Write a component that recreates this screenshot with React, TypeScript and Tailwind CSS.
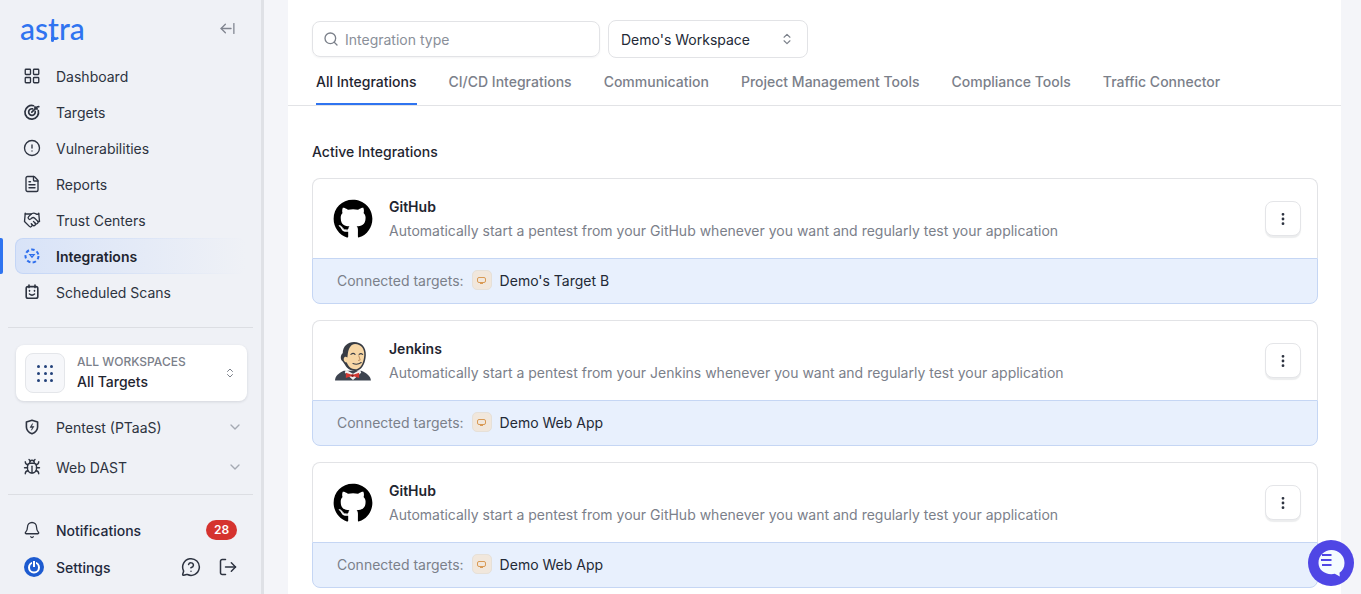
import React from "react";
import {
  LayoutGrid, CircleAlert, FileText, Handshake, ChevronsUpDown, ChevronDown, Bell, LogOut, Search, EllipsisVertical, Bug, ArrowLeftFromLine, MessageCircleQuestion,
} from "lucide-react";
import { FaGithub } from "react-icons/fa";

function TargetIcon() {
  return (
    <svg width="18" height="18" viewBox="0 0 18 18" fill="none" stroke="#2d3340" strokeWidth="1.7" strokeLinecap="round">
      <path d="M15.300 7.500A6.800 6.800 0 1 1 10.500 2.700" />
      <path d="M12.200 8.400A3.300 3.300 0 1 1 9.600 5.800" />
      <path d="M8.800 9.200L14 4M12 3.800V5.900H14.200M14 4l1.800-.4" />
    </svg>
  );
}

function IntegrationsIcon() {
  return (
    <svg width="18" height="18" viewBox="0 0 18 18" fill="none" stroke="#2f6fed" strokeWidth="2">
      <circle cx="9" cy="9" r="6.500" strokeDasharray="3.500 2.300" />
      <path d="M6.800 7.600h4.400L9 10.400z" strokeWidth="1.200" />
    </svg>
  );
}

function ScheduledIcon() {
  return (
    <svg width="18" height="18" viewBox="0 0 18 18" fill="none" stroke="#2d3340" strokeWidth="1.600" strokeLinecap="round">
      <rect x="3.200" y="3.600" width="11.600" height="11.600" rx="1.800" />
      <path d="M6 2v2.600M12 2v2.600M6.500 7.500v.6M11.500 7.500v.6M6.500 11c1.400 1.200 3.600 1.200 5 0" />
    </svg>
  );
}

function PentestIcon() {
  return (
    <svg width="18" height="18" viewBox="0 0 18 18" fill="none" stroke="#2d3340" strokeWidth="1.600" strokeLinejoin="round">
      <path d="M9 2.200l5.600 1.800v5c0 3.300-2.400 5.500-5.600 6.800C5.800 14.500 3.400 12.300 3.400 9V4z" />
      <path d="M9.600 5.500L7 9.400h2.400L8.400 12.300 11 8.500H8.700z" fill="#2d3340" strokeWidth="0.500" />
    </svg>
  );
}

function Jenkins() {
  return (
    <svg width="38" height="40" viewBox="0 0 36 39">
      <path d="M0.500 38.500c0-4 3-7 8.500-9.500h17c5 2 9 5 9.500 9.500z" fill="#3d4450" />
      <path d="M11 28l7 4 7-4 1 3-8 7-8-7z" fill="#f1f1f1" />
      <path d="M8 20C5 18 6 13 8 12 8 5 13 1 19 1c7 0 12 5 11.500 13-.5 7-2.500 13-8.500 15-6 1-10-2-12-6z" fill="#383c44" />
      <path d="M13 12C14 7 16 3 20 3c6 0 9.500 5 9 11-.5 7-3 12.500-7.500 13.500-4.500.5-8-2-9.500-6.500-2 0-3.500-2-3-4 .5-2 2-2 3.500-1z" fill="#f7d7a6" />
      <path d="M16 13c1.300-1 3-1 4 0M24 13c1-.8 2.400-.8 3.400 0M18 22c2.500 1 5.500.8 8-1" fill="none" stroke="#383c44" strokeWidth="1.100" strokeLinecap="round" />
      <path d="M23.500 14l1.500 4.500-2 .5" fill="none" stroke="#b98a5c" strokeWidth="0.900" />
      <path d="M11 31l6 1.800 1 0 6-1.800v5l-6-1.800-1 0-6 1.800z" fill="#d33833" />
      <circle cx="17.500" cy="33.800" r="1.300" fill="#8f1f1c" />
    </svg>
  );
}

const ic = { size: 18, strokeWidth: 1.800, color: "#2d3340" };

const nav = [
  { label: "Dashboard", icon: <LayoutGrid {...ic} /> },
  { label: "Targets", icon: <TargetIcon /> },
  { label: "Vulnerabilities", icon: <CircleAlert {...ic} /> },
  { label: "Reports", icon: <FileText {...ic} /> },
  { label: "Trust Centers", icon: <Handshake {...ic} /> },
  { label: "Integrations", icon: <IntegrationsIcon />, active: true },
  { label: "Scheduled Scans", icon: <ScheduledIcon /> },
];

const tabs = ["All Integrations", "CI/CD Integrations", "Communication", "Project Management Tools", "Compliance Tools", "Traffic Connector"];

const cards = [
  { name: "GitHub", target: "Demo's Target B", logo: <FaGithub size={40} color="#000" /> },
  { name: "Jenkins", target: "Demo Web App", logo: <Jenkins /> },
  { name: "GitHub", target: "Demo Web App", logo: <FaGithub size={40} color="#000" /> },
];

function NavRow({ n }: { n: (typeof nav)[number] }) {
  if (n.active) {
    return (
      <div className="relative h-[36px] flex items-center">
        <span className="absolute left-0 top-0 h-[36px] w-[3px] bg-[#2f74f0] rounded-r-[2px]" />
        <div className="ml-[15px] mr-[15px] flex-1 h-[36px] rounded-[8px] p-[1px] bg-gradient-to-r from-[#c3d5f6] to-[#eff1f6]">
          <div className="h-[34px] flex items-center rounded-[7px] pl-[7px] bg-gradient-to-r from-[#d8e3f8] to-[#eff1f6]">
            <span className="w-[33px] flex items-center">{n.icon}</span>
            <span className="text-[14px] font-semibold text-[#1f2530]">{n.label}</span>
          </div>
        </div>
      </div>
    );
  }
  return (
    <div className="h-[36px] flex items-center pl-[23px]">
      <span className="w-[33px] flex items-center">{n.icon}</span>
      <span className="text-[14px] text-[#2d3340]">{n.label}</span>
    </div>
  );
}

function Sidebar() {
  return (
    <aside className="w-[264px] h-[594px] shrink-0 bg-[#eff1f6] border-r-[3px] border-[#dfe1e6] flex flex-col overflow-hidden">
      <div className="h-[58px] flex items-center justify-between pl-[20px] pr-[25px] pb-[2px]">
        <span className="relative text-[#2f74f0] text-[30px] leading-none font-medium font-['Lato',sans-serif]">
          astra
          <span className="absolute left-[31px] top-[24px] w-[3px] h-[5px] bg-[#2f74f0] rounded-b-full" />
        </span>
        <ArrowLeftFromLine size={17} color="#808590" strokeWidth={1.800} />
      </div>
      <nav className="flex flex-col">
        {nav.map((n) => <NavRow key={n.label} n={n} />)}
      </nav>
      <div className="mx-[8px] mt-[17px] border-t border-[#dcdee3]" />
      <div className="ml-[16px] w-[231px] mt-[17px] h-[56px] bg-white rounded-[8px] shadow-[0_1px_3px_rgba(16,24,40,0.12)] flex items-center pl-[9px] pr-[11px]">
        <div className="w-[40px] h-[40px] rounded-[8px] border border-[#e4e6ea] bg-[#f6f7fa] grid grid-cols-3 gap-[4px] place-items-center px-[11px] py-[11px]">
          {Array.from({ length: 9 }).map((_, i) => (
            <span key={i} className="w-[3px] h-[3px] rounded-full bg-[#23427a]" />
          ))}
        </div>
        <div className="ml-[12px] flex-1 flex flex-col">
          <span className="text-[12px] leading-[16px] font-medium text-[#7b808a]">ALL WORKSPACES</span>
          <span className="mt-[2px] text-[14px] leading-[20px] font-medium text-[#1f2530]">All Targets</span>
        </div>
        <ChevronsUpDown size={12} color="#7b808a" />
      </div>
      <div className="mt-[6px] h-[40px] flex items-center pl-[23px] pr-[18px]">
        <span className="w-[33px]"><PentestIcon /></span>
        <span className="flex-1 text-[14px] text-[#2d3340]">Pentest (PTaaS)</span>
        <ChevronDown size={16} color="#a5a9b2" />
      </div>
      <div className="h-[40px] flex items-center pl-[23px] pr-[18px]">
        <span className="w-[33px]"><Bug {...ic} /></span>
        <span className="flex-1 text-[14px] text-[#2d3340]">Web DAST</span>
        <ChevronDown size={16} color="#a5a9b2" />
      </div>
      <div className="mx-[8px] mt-[7px] border-t border-[#dcdee3]" />
      <div className="mt-[17px] h-[36px] flex items-center pl-[23px] pr-[24px]">
        <span className="w-[33px]"><Bell size={18} strokeWidth={1.700} color="#2d3340" /></span>
        <span className="flex-1 text-[14px] font-medium text-[#1f2a3d]">Notifications</span>
        <span className="w-[31px] h-[20px] rounded-full bg-[#d5332f] text-white text-[12px] font-semibold flex items-center justify-center">28</span>
      </div>
      <div className="h-[38px] flex items-center pl-[24px] pr-[23px]">
        <span className="w-[32px]">
          <svg width="20" height="20" viewBox="0 0 20 20" fill="none">
            <circle cx="10" cy="10" r="10" fill="#1d5bd0" />
            <circle cx="10" cy="10.500" r="5" stroke="#fff" strokeWidth="2" />
            <path d="M10 3.500v6.500" stroke="#1d5bd0" strokeWidth="4" />
            <path d="M10 4v6" stroke="#fff" strokeWidth="2" />
          </svg>
        </span>
        <span className="flex-1 text-[14px] font-medium text-[#1f2a3d]">Settings</span>
        <MessageCircleQuestion size={20} strokeWidth={1.800} color="#2d3340" className="mr-[17px]" />
        <LogOut size={20} strokeWidth={1.800} color="#2d3340" />
      </div>
    </aside>
  );
}

function Card({ name, target, logo }: { name: string; target: string; logo: React.ReactNode }) {
  return (
    <div className="h-[126px] flex flex-col">
      <div className="h-[80px] flex items-center pl-[20px] pr-[16px] bg-white rounded-t-[8px] border border-b-0 border-[#e2e3e6]">
        <div className="w-[40px] flex items-center justify-center">{logo}</div>
        <div className="ml-[16px] flex-1 flex flex-col">
          <span className="text-[14px] leading-[20px] font-semibold text-[#1f2530]">{name}</span>
          <span className="mt-[4px] text-[14px] leading-[20px] text-[#7b808a]">
            Automatically start a pentest from your {name} whenever you want and regularly test your application
          </span>
        </div>
        <div className="w-[36px] h-[35px] rounded-[8px] border border-[#e4e5e8] bg-white shadow-[0_2px_1px_rgba(16,24,40,0.08)] flex items-center justify-center">
          <EllipsisVertical size={16} color="#2d3340" strokeWidth={2.200} />
        </div>
      </div>
      <div className="h-[46px] bg-[#e8f0fd] rounded-b-[8px] border border-[#c5d6f4] flex items-center pl-[24px] pb-[2px]">
        <span className="text-[14px] text-[#7b808a]">Connected targets:</span>
        <span className="ml-[8px] w-[20px] h-[20px] rounded-[5px] bg-[#f1e7dc] border border-[#e6e0d8] flex flex-col items-center justify-center">
          <span className="w-[9px] h-[6px] rounded-[2px] border border-[#d99a55]" />
          <span className="w-[3px] h-[1px] bg-[#d99a55]" />
        </span>
        <span className="ml-[8px] text-[14px] text-[#232936]">{target}</span>
      </div>
    </div>
  );
}

export default function App() {
  return (
    <div className="relative w-[1361px] h-[594px] overflow-hidden bg-[#f4f5f9] flex font-['Inter',sans-serif]">
      <Sidebar />
      <main className="ml-[24px] w-[1053px] h-[594px] bg-white overflow-hidden flex flex-col">
        <div className="flex items-center pl-[24px] pt-[20px] gap-[8px]">
          <div className="w-[288px] h-[36px] rounded-[8px] border border-[#e2e3e6] shadow-[0_1px_2px_rgba(16,24,40,0.05)] flex items-center pl-[10px]">
            <Search size={16} color="#7b808a" />
            <span className="ml-[6px] text-[14px] text-[#8a8f99]">Integration type</span>
          </div>
          <div className="w-[200px] h-[38px] rounded-[8px] border border-[#e2e3e6] flex items-center justify-between pl-[12px] pr-[13px]">
            <span className="text-[14px] text-[#232936]">Demo's Workspace</span>
            <ChevronsUpDown size={14} color="#7b808a" />
          </div>
        </div>
        <div className="h-[48px] border-b border-[#e2e3e6] flex pl-[28px] gap-[32px]">
          {tabs.map((t, i) => (
            <div key={t} className={`h-[47px] flex items-center text-[14px] font-medium ${i === 0 ? "pt-[2px] border-b-2 border-[#2f74f0] text-[#1f2530]" : "pb-[1px] text-[#7b808a]"}`}>
              {t}
            </div>
          ))}
        </div>
        <div className="pl-[24px] pr-[23px] pt-[36px]">
          <h2 className="h-[20px] text-[14px] leading-[20px] font-medium text-[#1f2530]">Active Integrations</h2>
          <div className="mt-[16px] flex flex-col gap-[16px]">
            {cards.map((c, i) => <Card key={i} {...c} />)}
          </div>
        </div>
      </main>
      <div className="absolute left-[1308px] top-[540px] w-[46px] h-[46px] rounded-full bg-[#4f46e5] flex items-center justify-center">
        <svg width="28" height="28" viewBox="0 0 28 28">
          <path d="M14.500 1c7.200 0 13 5.600 13 13 0 4.500-2 7.800-5 9.800l.3 3.700-5-2.700C9 26.500 1.500 21.500 1.500 14 1.500 6.600 7.300 1 14.500 1z" fill="#f4fbff" />
          <path d="M5 6h9.500M4 11h10.500M5 16h9.500" stroke="#4f46e5" strokeWidth="2" />
        </svg>
      </div>
    </div>
  );
}
